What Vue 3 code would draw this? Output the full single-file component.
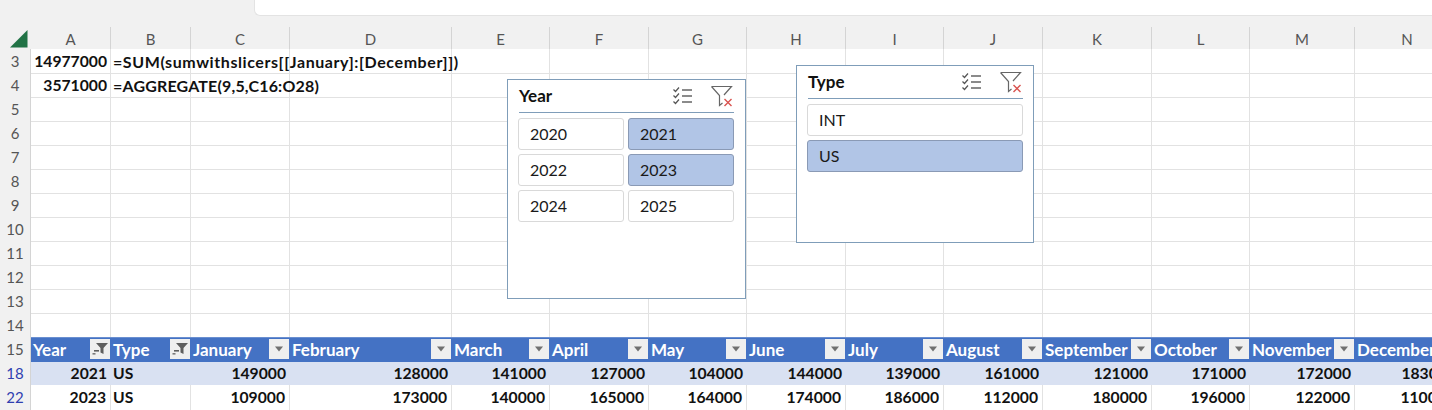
<script setup>
const widths = [80, 80, 99, 162, 98, 99, 98, 99, 98, 99, 109, 98, 105, 105]
const letters = 'ABCDEFGHIJKLMN'.split('')
const template = '31px ' + widths.map((w) => w + 'px').join(' ')
const blank = Array.from({ length: 14 }, (_, i) => i)
const plainRows = [
  { n: 3, a: '14977000', b: '=SUM(sumwithslicers[[January]:[December]])', f: 'wide' },
  { n: 4, a: '3571000', b: '=AGGREGATE(9,5,C16:O28)', f: 'tight' },
  ...[5, 6, 7, 8, 9, 10, 11, 12, 13, 14].map((n) => ({ n, a: '', b: '', f: '' })),
]
const heads = ['Year', 'Type', 'January', 'February', 'March', 'April', 'May', 'June', 'July', 'August', 'September', 'October', 'November', 'December']
const dataRows = [
  { n: 18, cls: 'band', vals: ['2021', 'US', '149000', '128000', '141000', '127000', '104000', '144000', '139000', '161000', '121000', '171000', '172000', '183000'] },
  { n: 22, cls: 'plain', vals: ['2023', 'US', '109000', '173000', '140000', '165000', '164000', '174000', '186000', '112000', '180000', '196000', '122000', '110000'] },
]
const years = [
  { t: '2020', on: false }, { t: '2021', on: true },
  { t: '2022', on: false }, { t: '2023', on: true },
  { t: '2024', on: false }, { t: '2025', on: false },
]
const types = [{ t: 'INT', on: false }, { t: 'US', on: true }]
const slicers = [
  { title: 'Year', cls: 'year', items: years },
  { title: 'Type', cls: 'type', items: types },
]
</script>

<template>
  <div class="app">
    <div class="ribbon"><div class="formula"></div></div>

    <div class="row head-row" :style="{ gridTemplateColumns: template }">
      <div class="corner"><svg width="31" height="22" viewBox="0 0 31 22"><polygon points="10,20.5 27.5,20.5 27.5,3" fill="#217346" /></svg></div>
      <div v-for="l in letters" :key="l" class="col-letter">{{ l }}</div>
    </div>

    <div v-for="r in plainRows" :key="r.n" class="row" :style="{ gridTemplateColumns: template }">
      <div class="row-num">{{ r.n }}</div>
      <div v-for="i in blank" :key="i" class="cell">
        <span v-if="i === 0 && r.a" class="num">{{ r.a }}</span>
        <span v-if="i === 1 && r.b" class="formula-text" :class="r.f">{{ r.b }}</span>
      </div>
    </div>

    <div class="row" :style="{ gridTemplateColumns: template }">
      <div class="row-num">15</div>
      <div v-for="(h, i) in heads" :key="h" class="th">
        <span>{{ h }}</span>
        <span class="filter">
          <svg v-if="i < 2" width="18" height="14" viewBox="0 0 18 14">
            <polygon points="5,1 17,1 12.5,6 12.5,12 9.5,10.5 9.5,6" fill="#5f5f5f" />
            <rect x="3" y="8" width="5" height="1.6" fill="#5f5f5f" />
            <rect x="1.5" y="11" width="3" height="1.6" fill="#7a7a7a" />
          </svg>
          <svg v-else width="10" height="6" viewBox="0 0 10 6"><polygon points="1,0.5 9,0.5 5,5.5" fill="#707070" /></svg>
        </span>
      </div>
    </div>

    <div v-for="r in dataRows" :key="r.n" class="row" :style="{ gridTemplateColumns: template }">
      <div class="row-num filtered">{{ r.n }}</div>
      <div v-for="(v, i) in r.vals" :key="i" class="td" :class="[r.cls, i === 1 ? 'left' : '']">{{ v }}</div>
    </div>

    <div v-for="s in slicers" :key="s.title" class="slicer" :class="s.cls">
      <div class="slicer-head">
        <span class="slicer-title">{{ s.title }}</span>
        <svg class="ico-multi" width="22" height="20" viewBox="0 0 22 20" fill="none">
          <path d="M1.5 3.5l2 2 3.5-4M1.5 9.5l2 2 3.5-4M1.5 15.5l2 2 3.5-4" stroke="#555" stroke-width="1.2" />
          <path d="M10 4h10M10 10h10M10 16h10" stroke="#666" stroke-width="1.6" />
        </svg>
        <svg class="ico-clear" width="24" height="22" viewBox="0 0 24 22" fill="none">
          <path d="M1.5 1.5h20l-7.5 8.5M1.5 1.5l8 9v10l3-2.5" stroke="#666" stroke-width="1.2" />
          <path d="M14.5 14l7 7M21.5 14l-7 7" stroke="#d9534f" stroke-width="1.4" />
        </svg>
      </div>
      <div class="slicer-items">
        <div v-for="it in s.items" :key="it.t" class="item" :class="{ on: it.on }">{{ it.t }}</div>
      </div>
    </div>
  </div>
</template>

<style>
html, body { margin: 0; background: #fff; }
</style>

<style scoped>
.app {
  position: relative;
  width: 1432px;
  height: 410px;
  overflow: hidden;
  background: #fff;
  font-family: Lato, "Open Sans", sans-serif;
  color: #111;
}
.ribbon { height: 27px; background: #f1f1f1; padding-left: 254px; box-sizing: border-box; }
.formula { height: 16px; background: #fff; border: 1px solid #e3e3e3; border-top: 0; border-right: 0; border-bottom-left-radius: 6px; box-sizing: border-box; }
.row { display: grid; height: 24px; }
.head-row { height: 22px; background: #f1f1f1; }
.corner { height: 22px; }
.corner svg { display: block; }
.col-letter { text-align: center; font-size: 15px; line-height: 24px; color: #555; border-right: 1px solid #d4d4d4; box-sizing: border-box; }
.row-num { background: #f1f1f1; border-right: 1px solid #d4d4d4; box-sizing: border-box; text-align: center; font-size: 15px; line-height: 24px; color: #555; border-bottom: 1px solid #e0e0e0; }
.row-num.filtered { color: #2f3fb0; }
.cell { position: relative; border-right: 1px solid #e2e2e2; border-bottom: 1px solid #e2e2e2; box-sizing: border-box; font-size: 15.7px; font-weight: 700; line-height: 25px; white-space: nowrap; min-width: 0; }
.num { position: absolute; right: 3px; top: 0; }
.formula-text { position: absolute; left: 2px; top: 0; z-index: 1; font-size: 16px; }
.formula-text.wide { letter-spacing: 0.58px; }
.formula-text.tight { letter-spacing: 0.17px; }
.th { position: relative; background: #4472c4; color: #fff; font-size: 17px; font-weight: 700; line-height: 23px; padding-left: 2px; box-sizing: border-box; white-space: nowrap; overflow: hidden; border-top: 1px solid #6a8fd0; }
.filter { position: absolute; right: 1px; top: 1px; width: 20px; height: 20px; background: #efefef; display: flex; align-items: center; justify-content: center; }
.td { font-size: 15.7px; font-weight: 700; line-height: 25px; text-align: right; padding-right: 4px; box-sizing: border-box; border-bottom: 1px solid #8ea9db; white-space: nowrap; }
.td.left { text-align: left; padding-left: 2px; padding-right: 0; }
.td.band { background: #d9e1f2; }
.td.plain { background: #fff; border-right: 1px solid #e2e2e2; }
.slicer { position: absolute; background: #fff; border: 1px solid #7f9db9; box-sizing: border-box; z-index: 2; padding: 0 10px; }
.slicer.year { left: 507px; top: 79px; width: 239px; height: 220px; padding-right: 11px; }
.slicer.type { left: 796px; top: 65px; width: 238px; height: 178px; }
.slicer-head { display: flex; align-items: center; height: 32px; border-bottom: 1px solid #7f9db9; margin-left: 1px; }
.slicer-title { flex: 1; font-size: 17px; font-weight: 700; color: #111; margin-top: -2px; }
.ico-multi { margin-right: 16px; margin-top: -1px; }
.ico-clear { margin-top: -1px; }
.slicer-items { display: grid; gap: 4px; margin-top: 5px; }
.year .slicer-items { grid-template-columns: 1fr 1fr; grid-auto-rows: 32px; }
.type .slicer-items { grid-template-columns: 1fr; grid-auto-rows: 32px; }
.item { border: 1px solid #d9d9d9; border-radius: 3px; box-sizing: border-box; font-size: 16px; line-height: 30px; padding-left: 11px; color: #1a1a1a; background: #fff; }
.item.on { background: #b1c5e6; border-color: #8a9ab5; }
</style>
